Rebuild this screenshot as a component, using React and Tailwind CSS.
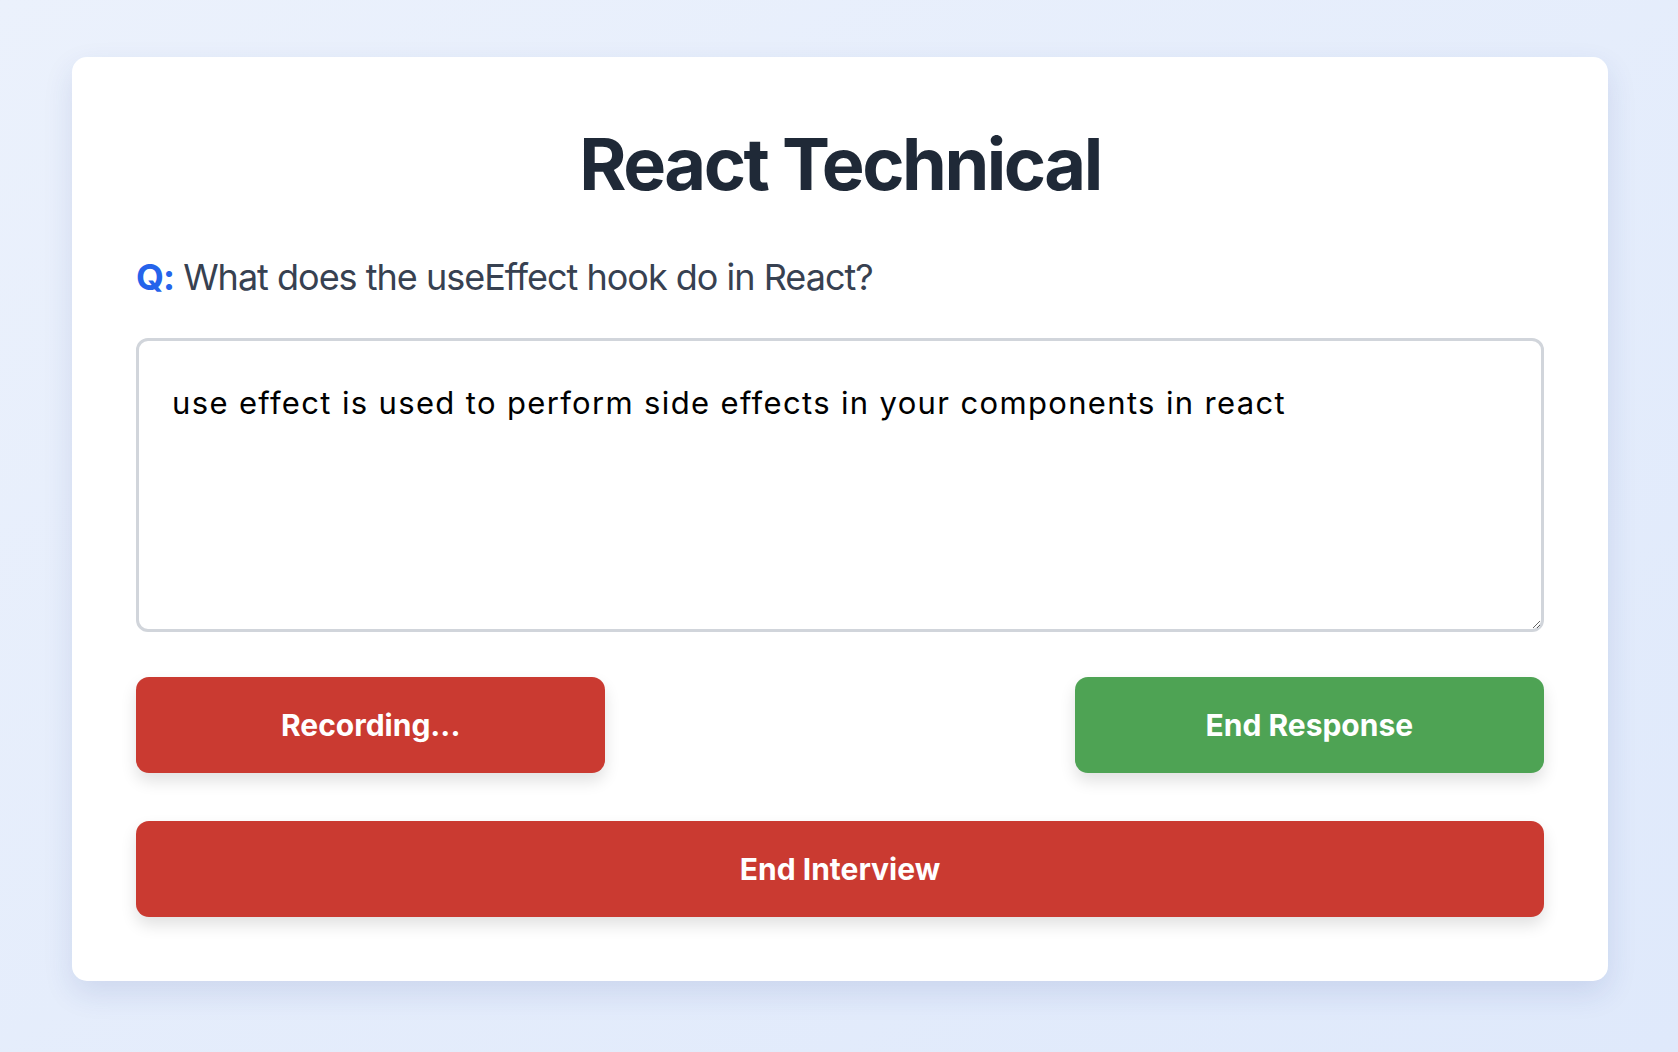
import React from "react";

const InterviewCard = () => {
  return (
    <div className="bg-white rounded-[15px] shadow-[0_12px_30px_rgba(30,58,138,0.12)] px-16 pt-16 pb-16">
      {/* Title */}
      <h1 className="text-center text-[72px] leading-[86px] font-bold text-[#1f2937] tracking-[-2.5px]">
        React Technical
      </h1>

      {/* Question */}
      <p className="mt-[46px] text-[36px] leading-[48px] text-[#374151] tracking-[-1px]">
        <span className="font-bold text-[#2563eb]">Q:</span> What does the useEffect hook do in React?
      </p>

      {/* Answer box */}
      <textarea
        className="mt-[37px] block w-full h-[294px] border-[3px] border-[#d1d5db] rounded-[12px] pl-[33px] pr-[33px] pt-[42px] text-[31px] leading-[40px] tracking-[1.35px] text-black outline-none"
        defaultValue="use effect is used to perform side effects in your components in react"
      />

      {/* Actions */}
      <div className="mt-[45px] flex justify-between">
        <button className="w-1/3 h-[96px] rounded-[13px] bg-[#ca3a31] text-white text-[30px] font-bold shadow-[0_8px_16px_rgba(0,0,0,0.12)]">
          Recording...
        </button>
        <button className="w-1/3 h-[96px] rounded-[13px] bg-[#4ea354] text-white text-[30px] font-bold shadow-[0_8px_16px_rgba(0,0,0,0.12)]">
          End Response
        </button>
      </div>

      <button className="mt-[48px] w-full h-[96px] rounded-[13px] bg-[#ca3a31] text-white text-[30px] font-bold shadow-[0_8px_16px_rgba(0,0,0,0.12)]">
        End Interview
      </button>
    </div>
  );
};

export default function App() {
  return (
    <div
      className="min-h-[1052px] bg-gradient-to-br from-[#ebf1fc] to-[#dfe9fb] pl-[72px] pr-[70px] pt-[57px]"
      style={{ fontFamily: "Inter, 'Noto Sans', sans-serif" }}
    >
      <InterviewCard />
    </div>
  );
}
